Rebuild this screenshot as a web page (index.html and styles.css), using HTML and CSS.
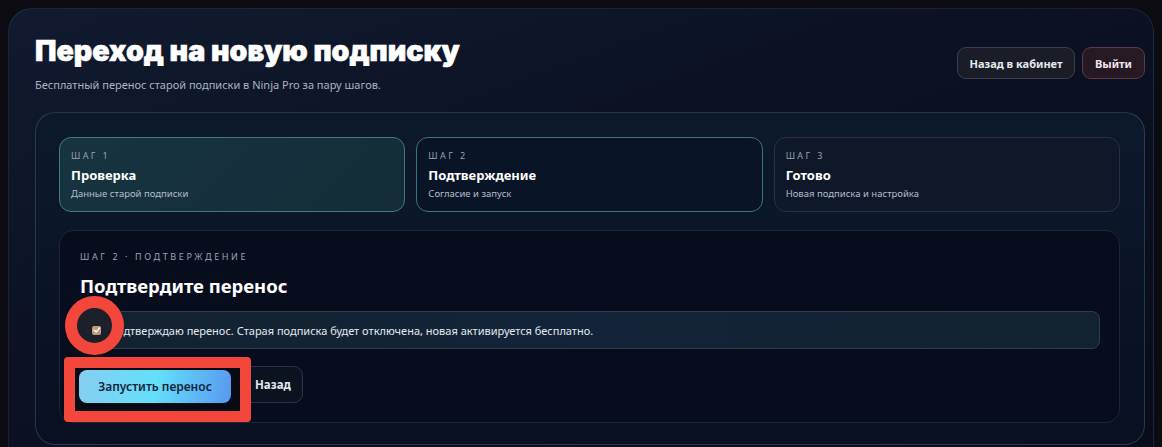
FILE: index.html
```html
<!DOCTYPE html>
<html lang="ru">
<head>
<meta charset="utf-8">
<title>Переход на новую подписку</title>
<link rel="stylesheet" href="styles.css">
</head>
<body>
<div class="shell">
  <header class="header">
    <div class="titles">
      <h1 class="title">Переход на новую подписку</h1>
      <p class="subtitle">Бесплатный перенос старой подписки в Ninja Pro за пару шагов.</p>
    </div>
    <div class="top-actions">
      <button class="btn btn-ghost">Назад в кабинет</button>
      <button class="btn btn-exit">Выйти</button>
    </div>
  </header>

  <section class="panel">
    <div class="steps">
      <div class="step step-done">
        <div class="step-label">ШАГ 1</div>
        <div class="step-title">Проверка</div>
        <div class="step-desc">Данные старой подписки</div>
      </div>
      <div class="step step-active">
        <div class="step-label">ШАГ 2</div>
        <div class="step-title">Подтверждение</div>
        <div class="step-desc">Согласие и запуск</div>
      </div>
      <div class="step">
        <div class="step-label">ШАГ 3</div>
        <div class="step-title">Готово</div>
        <div class="step-desc">Новая подписка и настройка</div>
      </div>
    </div>

    <div class="confirm">
      <div class="confirm-label">ШАГ 2 · ПОДТВЕРЖДЕНИЕ</div>
      <h2 class="confirm-title">Подтвердите перенос</h2>
      <label class="check-row">
        <span class="checkbox"><svg viewBox="0 0 10 10" width="8" height="8"><path d="M1.6 5.2 L4 7.4 L8.4 2.4" fill="none" stroke="#fff" stroke-width="1.6" stroke-linecap="round" stroke-linejoin="round"/></svg></span>
        <span class="check-text">Подтверждаю перенос. Старая подписка будет отключена, новая активируется бесплатно.</span>
      </label>
      <div class="actions">
        <button class="btn btn-primary">Запустить перенос</button>
        <button class="btn btn-back">Назад</button>
      </div>
    </div>
  </section>
</div>

<div class="mark-circle"></div>
<div class="mark-rect"></div>
</body>
</html>
```

FILE: styles.css
```css
* { box-sizing: border-box; }

html, body { height: 100%; }

body {
  margin: 8px 8px 0 8px;
  background: #0c0b12;
  font-family: "Noto Sans", "Open Sans", Arial, sans-serif;
  color: #e8edf5;
  overflow: hidden;
}

.shell {
  height: calc(100vh - 8px);
  border: 1px solid rgba(120, 140, 180, 0.16);
  border-bottom: none;
  border-radius: 24px 24px 0 0;
  background: linear-gradient(160deg, #111a2f 0%, #0c1224 40%, #090c1a 100%);
  padding: 24px 8px 0 26px;
}

.header {
  display: flex;
  justify-content: space-between;
  align-items: center;
}

.title {
  margin: 0;
  font-family: Inter, "Noto Sans", sans-serif;
  font-weight: 900;
  font-size: 28.6px;
  line-height: 36px;
  color: #ffffff;
  letter-spacing: 0;
  -webkit-text-stroke: 0.6px #ffffff;
}

.subtitle {
  margin: 8px 0 0;
  font-size: 11px;
  line-height: 16px;
  color: #aab3c2;
}

.top-actions {
  display: flex;
  gap: 7px;
}

.btn {
  font-family: "Noto Sans", "Open Sans", Arial, sans-serif;
  font-weight: 700;
  font-size: 11px;
  border-radius: 9px;
  cursor: pointer;
}

.btn-ghost {
  height: 32px;
  width: 118px;
  padding: 0;
  background: #1a1d28;
  border: 1px solid #3a3e4b;
  color: #e6e8ee;
}

.btn-exit {
  height: 32px;
  width: 63px;
  padding: 0;
  background: #261923;
  border: 1px solid #5a3b4a;
  color: #f1e6ec;
}

.panel {
  margin-top: 19px;
  border: 1px solid rgba(80, 130, 160, 0.35);
  border-radius: 20px;
  background: linear-gradient(180deg, #0d1a2c 0%, #0a1426 50%, #081022 100%);
  padding: 24px 24px 21px 23px;
}

.steps {
  display: grid;
  grid-template-columns: repeat(3, 1fr);
  gap: 11px;
}

.step {
  height: 75px;
  border-radius: 12px;
  border: 1px solid #24314a;
  background: #0e1828;
  padding: 12px 11px 0;
}

.step-done {
  background: linear-gradient(135deg, #173440 0%, #132c38 100%);
  border-color: #3f7d79;
}

.step-active {
  background: #0a1427;
  border-color: #3b7580;
}

.step-label {
  font-size: 9px;
  line-height: 12px;
  letter-spacing: 2.4px;
  color: #98a3b1;
}

.step-title {
  margin-top: 4px;
  font-size: 13px;
  line-height: 18px;
  font-weight: 700;
  color: #ffffff;
}

.step-desc {
  margin-top: 3px;
  font-size: 9.5px;
  line-height: 14px;
  color: #b3bccb;
}

.confirm {
  margin-top: 18px;
  border: 1px solid #1c2738;
  border-radius: 14px;
  background: #070d1c;
  padding: 20px 19px 19px 20px;
}

.confirm-label {
  font-size: 9px;
  line-height: 12px;
  letter-spacing: 2.6px;
  color: #9aa4b3;
}

.confirm-title {
  margin: 11px 0 0;
  font-size: 18.5px;
  line-height: 24px;
  font-weight: 700;
  color: #ffffff;
}

.check-row {
  margin-top: 13px;
  height: 38px;
  display: flex;
  align-items: center;
  gap: 8px;
  padding-left: 11px;
  border: 1px solid #2c3d4f;
  border-radius: 8px;
  background: linear-gradient(90deg, #12222f 0%, #13243a 50%, #13222f 100%);
}

.checkbox {
  position: relative;
  z-index: 3;
  width: 9px;
  height: 9px;
  border-radius: 2px;
  background: #c09a7e;
  display: flex;
  align-items: center;
  justify-content: center;
}

.check-text {
  font-size: 11px;
  color: #e3e9f1;
}

.actions {
  margin-top: 17px;
  display: flex;
  align-items: flex-end;
  gap: 12px;
}

.btn-primary {
  position: relative;
  z-index: 3;
  width: 152px;
  height: 33px;
  border: none;
  border-radius: 8px;
  background: linear-gradient(100deg, #86cdf0 0%, #63e0fa 50%, #5a98ef 100%);
  color: #14253d;
  font-size: 12px;
  font-weight: 600;
  margin-left: -1px;
}

.btn-back {
  height: 37px;
  padding: 0 11px;
  background: #0b1220;
  border: 1px solid #2a3446;
  border-radius: 9px;
  color: #e4e8ef;
  font-size: 11.5px;
}

.mark-circle {
  position: absolute;
  left: 65px;
  top: 296px;
  width: 59px;
  height: 59px;
  border: 12px solid #f2473a;
  border-radius: 50%;
  background: #1b202b;
  z-index: 2;
}

.mark-rect {
  position: absolute;
  left: 64px;
  top: 357px;
  width: 187px;
  height: 65px;
  border: 11px solid #f2473a;
  border-radius: 4px;
  background: #060a12;
  z-index: 2;
}
```
